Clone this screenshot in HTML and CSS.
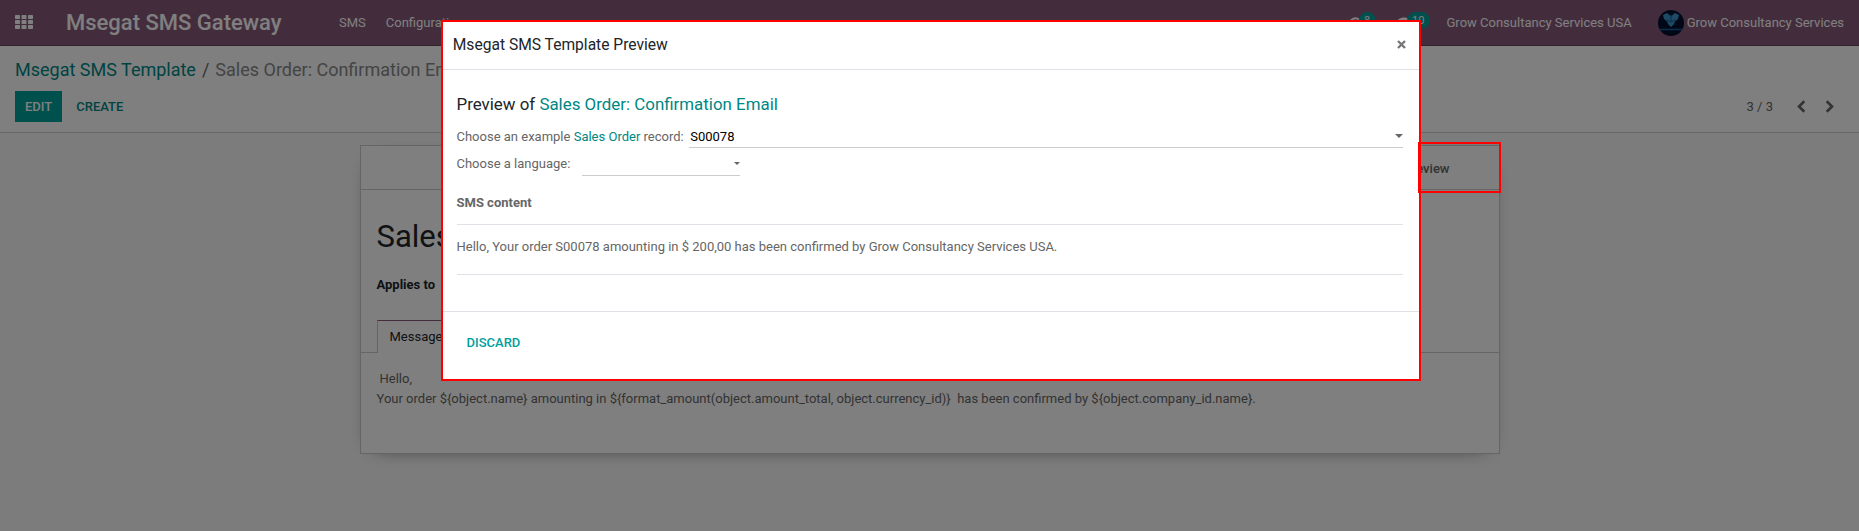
FILE: index.html
```html
<!DOCTYPE html>
<html lang="en">
<head>
<meta charset="utf-8">
<title>Msegat SMS Gateway</title>
<link rel="stylesheet" href="styles.css">
</head>
<body>
<header class="navbar">
  <svg class="apps" width="18" height="14" viewBox="0 0 18 14" fill="#fff">
    <rect x="0" y="0" width="5" height="4" rx=".7"/><rect x="6.5" y="0" width="5" height="4" rx=".7"/><rect x="13" y="0" width="5" height="4" rx=".7"/>
    <rect x="0" y="5" width="5" height="4" rx=".7"/><rect x="6.5" y="5" width="5" height="4" rx=".7"/><rect x="13" y="5" width="5" height="4" rx=".7"/>
    <rect x="0" y="10" width="5" height="4" rx=".7"/><rect x="6.5" y="10" width="5" height="4" rx=".7"/><rect x="13" y="10" width="5" height="4" rx=".7"/>
  </svg>
  <div class="brand">Msegat SMS Gateway</div>
  <nav class="menu"><span>SMS</span><span>Configuration</span></nav>
  <div class="systray">
    <span class="tray-item activity">
      <svg width="13" height="13" viewBox="0 0 13 13" fill="none" stroke="#fff" stroke-width="2"><path d="M1.2 7.2A5.3 5.3 0 0 1 10 2.6"/><path d="M11.8 6A5.3 5.3 0 0 1 3 10.6M7.500 4L5.500 7"/></svg>
      <span class="badge">8</span>
    </span>
    <span class="tray-item chat">
      <svg width="14" height="13" viewBox="0 0 14 13" fill="#fff"><path d="M7 .5c3.900 0 7 2.200 7 5s-3.100 5-7 5l-1.200-.1C4.500 11.600 3 12.300 1.200 12.500c.8-.7 1.300-1.700 1.400-2.900C1 8.600 0 7.200 0 5.500c0-2.800 3.100-5 7-5z"/></svg>
      <span class="badge">10</span>
    </span>
    <span class="company">Grow Consultancy Services USA</span>
    <svg class="avatar" width="26" height="26" viewBox="0 0 26 26"><circle cx="13" cy="13" r="13" fill="#001030"/><path d="M5 5l4-2 3 2.500h2L17 3l4 2-1 4-3 2.500-1 2.500-3 3-3-3-1-2.500L6 9z" fill="#3a94c8"/><path d="M8.500 10l4.500 2 4.500-2M13 6v5" fill="none" stroke="#0c4a78" stroke-width=".8"/><path d="M2 19.500h22" stroke="#125a94" stroke-width="1.500"/></svg>
    <span class="user">Grow Consultancy Services</span>
  </div>
</header>

<section class="control-panel">
  <div class="breadcrumb"><span class="crumb-link">Msegat SMS Template</span><span class="slash">/</span><span class="crumb-active">Sales Order: Confirmation Email</span></div>
  <div class="actions">
    <span class="btn btn-primary">Edit</span>
    <span class="btn btn-link">Create</span>
    <div class="pager">
      <span>3 / 3</span>
      <svg class="prev" width="9" height="13" viewBox="0 0 9 13"><path d="M7.300 1.300L2 6.500l5.300 5.200"/></svg>
      <svg class="next" width="9" height="13" viewBox="0 0 9 13"><path d="M1.700 1.300L7 6.500l-5.300 5.200"/></svg>
    </div>
  </div>
</section>

<main class="content">
  <div class="sheet">
    <div class="statusbar"><span>Preview</span></div>
    <h1>Sales Order: Confirmation Email</h1>
    <div class="applies">Applies to</div>
    <div class="tabs"><span class="tab">Message</span></div>
    <div class="message">
      <div class="hello">Hello,</div>
      <div>Your order ${object.name} amounting in ${format_amount(object.amount_total, object.currency_id)}&nbsp; has been confirmed by ${object.company_id.name}.</div>
    </div>
  </div>
</main>

<div class="backdrop"></div>

<div class="modal">
  <div class="modal-header">
    <span class="modal-title">Msegat SMS Template Preview</span>
    <svg class="close" width="9" height="9" viewBox="0 0 9 9"><path d="M1 1l7 7M8 1L1 8"/></svg>
  </div>
  <div class="modal-body">
    <div class="preview-title">Preview of <span class="teal">Sales Order: Confirmation Email</span></div>
    <div class="field">
      <span>Choose an example <span class="teal">Sales Order</span> record:</span>
      <span class="input record">S00078<i class="caret"></i></span>
    </div>
    <div class="field language">
      <span>Choose a language:</span>
      <span class="input lang"><i class="caret small"></i></span>
    </div>
    <div class="sms-label">SMS content</div>
    <div class="sms-text">Hello, Your order S00078 amounting in $ 200,00 has been confirmed by Grow Consultancy Services USA.</div>
  </div>
  <div class="modal-footer">Discard</div>
</div>
<div class="highlight"></div>
</body>
</html>
```
FILE: styles.css
```css
* { box-sizing: border-box; }
body {
  margin: 0;
  height: 531px;
  overflow: hidden;
  display: flex;
  flex-direction: column;
  font: 400 13px/20px Roboto, sans-serif;
  color: #666;
  background: #fff;
}
svg { display: block; flex: none; }
.teal { color: #008784; }

.navbar {
  height: 46px;
  flex: none;
  display: flex;
  align-items: center;
  padding: 1px 15px 0;
  background: #875a7b;
  border-bottom: 1px solid #68465f;
  color: #fff;
  white-space: nowrap;
}
.apps { margin-top: -2px; }
.brand { margin-left: 33px; width: 273px; font-size: 22px; font-weight: 500; }
.menu { display: flex; gap: 20px; }
.systray { margin-left: auto; display: flex; align-items: center; }
.tray-item { position: relative; }
.activity { margin-right: 35px; }
.chat { margin-right: 36px; }
.badge {
  position: absolute;
  left: 10px;
  top: -5px;
  padding: 0 5.500px;
  border-radius: 9px;
  background: #00a09d;
  font-size: 11px;
  line-height: 17px;
}
.avatar { margin: -1px 3px 0 26px; }

.control-panel {
  height: 87px;
  flex: none;
  padding: 13px 15px 0;
  border-bottom: 1px solid #ccc;
}
.breadcrumb { font-size: 18px; line-height: 22px; white-space: nowrap; display: flex; }
.crumb-link { color: #008784; }
.slash { margin: 0 6px; }
.crumb-active { color: #888; }
.actions { display: flex; align-items: center; margin-top: 10px; }
.btn { height: 31px; padding: 0 10px; line-height: 31px; font-weight: 500; text-transform: uppercase; }
.btn-primary { background: #00a09d; color: #fff; }
.btn-link { color: #008784; margin-left: 4px; }
.pager { margin-left: auto; display: flex; align-items: center; padding-right: 10px; }
.pager svg { fill: none; stroke: #666; stroke-width: 2.600; }
.prev { margin-left: 24px; }
.next { margin-left: 19px; }

.content { flex: 1; display: flex; flex-direction: column; align-items: center; padding-top: 12px; background: #f9f9f9; }
.sheet {
  width: 1140px;
  height: 309px;
  margin-left: 1px;
  background: #fff;
  border: 1px solid #c8c8d3;
  box-shadow: 0 5px 20px -15px #000;
}
.statusbar { height: 44px; padding: 13px 49.500px 0 0; border-bottom: 1px solid #ccc; text-align: right; font-weight: 500; }
h1 { margin: 28px 0 0 15.500px; font-size: 31px; line-height: 38px; font-weight: 400; color: #212529; }
.applies { margin: 19px 0 0 15.500px; font-weight: 700; color: #212529; }
.tabs { height: 33px; margin-top: 25px; padding-left: 15.500px; display: flex; border-bottom: 1px solid #c8c8d3; }
.tab { height: 33px; padding: 6px 12px 0; background: #fff; border: 1px solid #c8c8d3; border-top-color: #875a7b; border-bottom: 0; color: #212529; line-height: 20px; }
.message { padding: 16px 15.500px 0; line-height: 20px; }
.hello { padding-left: 3px; }

.backdrop { position: absolute; inset: 0; background: rgba(0, 0, 0, .5); }
.modal {
  position: absolute;
  left: 441px;
  top: 20px;
  width: 980px;
  height: 361px;
  border: 2px solid #f00;
  background: #fff;
}
.modal-header { height: 48px; padding: 0 13px 3px 9.750px; display: flex; align-items: center; justify-content: space-between; border-bottom: 1px solid #dee2e6; }
.modal-title { font-size: 15.600px; padding-top: 1px; color: #212529; }
.close { fill: none; stroke: #777; stroke-width: 2.400; }
.modal-body { height: 242px; padding: 23px 16px 0 13.500px; border-bottom: 1px solid #dee2e6; }
.preview-title { font-size: 16.900px; line-height: 22px; color: #212529; }
.field { display: flex; align-items: flex-start; margin-top: 12px; }
.field .input { position: relative; height: 21px; border-bottom: 1px solid #ccc; color: #000; }
.field .record { flex: 1; margin-left: 5px; padding-left: 1.500px; }
.field.language { margin-top: 6px; }
.field .lang { width: 158px; height: 22px; margin-left: 11.500px; }
.caret { position: absolute; right: 0; top: 7px; border: 4px solid transparent; border-top-color: #666; border-bottom: 0; }
.caret.small { right: 0; top: 8px; border-width: 3px 3px 0; }
.sms-label { margin-top: 17px; font-weight: 700; }
.sms-text { height: 51px; margin-top: 11px; padding-top: 12px; border: solid #dee2e6; border-width: 1px 0; }
.modal-footer { padding: 21px 23.500px; color: #00a09d; font-weight: 500; text-transform: uppercase; }
.highlight { position: absolute; left: 1418px; top: 142px; width: 83px; height: 51px; border: 2px solid #f00; }
```
